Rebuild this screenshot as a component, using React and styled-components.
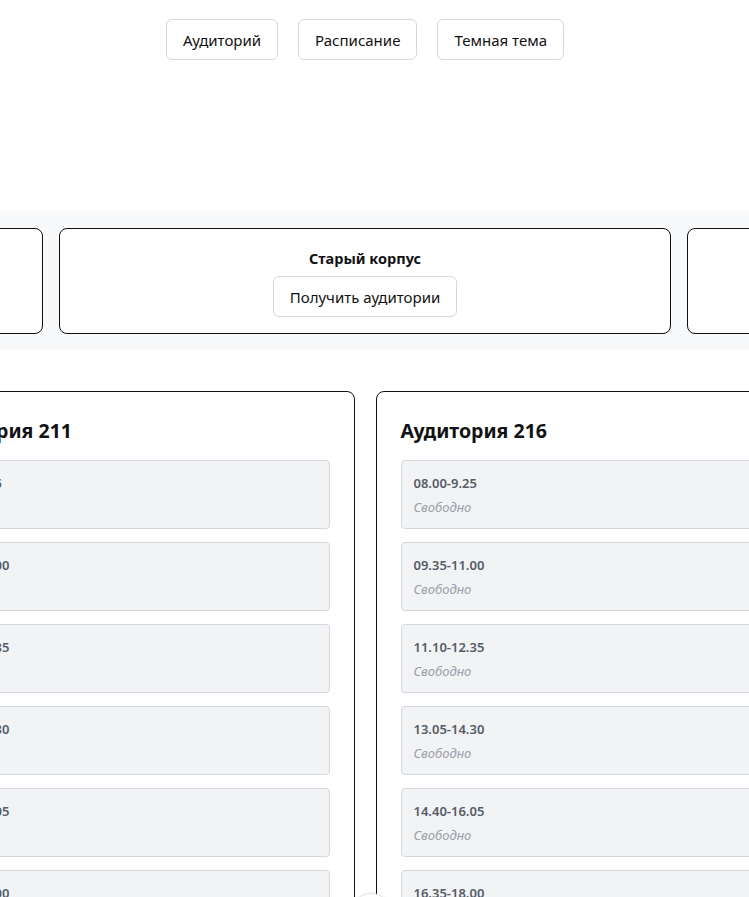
import styled, { createGlobalStyle } from "styled-components";

const GlobalStyle = createGlobalStyle`
  html, body {
    margin: 0;
    padding: 0;
    background: #ffffff;
    overflow: hidden;
  }

  body {
    font-family: "Noto Sans", "Open Sans", sans-serif;
    color: #111111;
  }

  * {
    box-sizing: border-box;
  }
`;

const buildings = ["Новый корпус", "Старый корпус", "Спортивный корпус"];

const slots = [
  "08.00-9.25",
  "09.35-11.00",
  "11.10-12.35",
  "13.05-14.30",
  "14.40-16.05",
  "16.35-18.00",
];

const rooms = ["Аудитория 211", "Аудитория 216"];

const App = () => {
  return (
    <Page>
      <GlobalStyle />
      <Nav>
        <NavButton>Аудиторий</NavButton>
        <NavButton>Расписание</NavButton>
        <NavButton>Темная тема</NavButton>
      </Nav>

      <Band>
        {buildings.map((name) => (
          <BuildingCard key={name}>
            <BuildingTitle>{name}</BuildingTitle>
            <NavButton>Получить аудитории</NavButton>
          </BuildingCard>
        ))}
      </Band>

      <RoomGrid>
        {rooms.map((room) => (
          <RoomCard key={room}>
            <RoomTitle>{room}</RoomTitle>
            <SlotList>
              {slots.map((time) => (
                <Slot key={time}>
                  <SlotTime>{time}</SlotTime>
                  <SlotStatus>Свободно</SlotStatus>
                </Slot>
              ))}
            </SlotList>
          </RoomCard>
        ))}
      </RoomGrid>

      <FloatButton />
    </Page>
  );
};

const Page = styled.div`
  width: 749px;
  height: 897px;
  overflow: hidden;
`;

const Nav = styled.nav`
  display: flex;
  justify-content: center;
  gap: 20px;
  padding: 19px 19px 0 0;
  height: 211px;
`;

const NavButton = styled.button`
  height: 41px;
  padding: 0 16px;
  font-family: inherit;
  font-size: 15px;
  color: #111111;
  background: #ffffff;
  border: 1px solid #d4d7dd;
  border-radius: 6px;
  cursor: pointer;
`;

const Band = styled.section`
  display: flex;
  justify-content: center;
  gap: 16px;
  padding: 17px 19px 16px 0;
  background: #f8f9fb;
  overflow: hidden;
`;

const BuildingCard = styled.div`
  flex: 0 0 612px;
  height: 106px;
  display: flex;
  flex-direction: column;
  align-items: center;
  justify-content: flex-end;
  gap: 8px;
  padding: 0 0 16px;
  background: #ffffff;
  border: 1px solid #111111;
  border-radius: 8px;
`;

const BuildingTitle = styled.div`
  font-size: 14.5px;
  font-weight: 700;
`;

const RoomGrid = styled.section`
  display: flex;
  justify-content: center;
  gap: 21px;
  padding: 41px 19px 0 0;
`;

const RoomCard = styled.div`
  flex: 0 0 454px;
  padding: 25px 24px 24px;
  border: 1px solid #111111;
  border-radius: 8px;
  background: #ffffff;
`;

const RoomTitle = styled.h2`
  margin: 0 0 15px;
  font-size: 19.5px;
  line-height: 28px;
  font-weight: 700;
`;

const SlotList = styled.div`
  display: flex;
  flex-direction: column;
  gap: 13px;
`;

const Slot = styled.div`
  height: 69px;
  padding: 12px 12px 0;
  display: flex;
  flex-direction: column;
  gap: 4px;
  background: #f2f3f5;
  border: 1px solid #d4d7dd;
  border-radius: 4px;
`;

const SlotTime = styled.div`
  font-size: 13px;
  line-height: 20px;
  font-weight: 600;
  color: #565c67;
`;

const SlotStatus = styled.div`
  font-size: 13px;
  line-height: 20px;
  font-style: italic;
  color: #9ca0a8;
`;

const FloatButton = styled.button`
  position: fixed;
  left: 351px;
  top: 893px;
  width: 40px;
  height: 40px;
  border-radius: 50%;
  background: #ffffff;
  border: 1px solid #e3e5e9;
  box-shadow: 0 2px 6px rgba(0, 0, 0, 0.12);
`;

export default App;
